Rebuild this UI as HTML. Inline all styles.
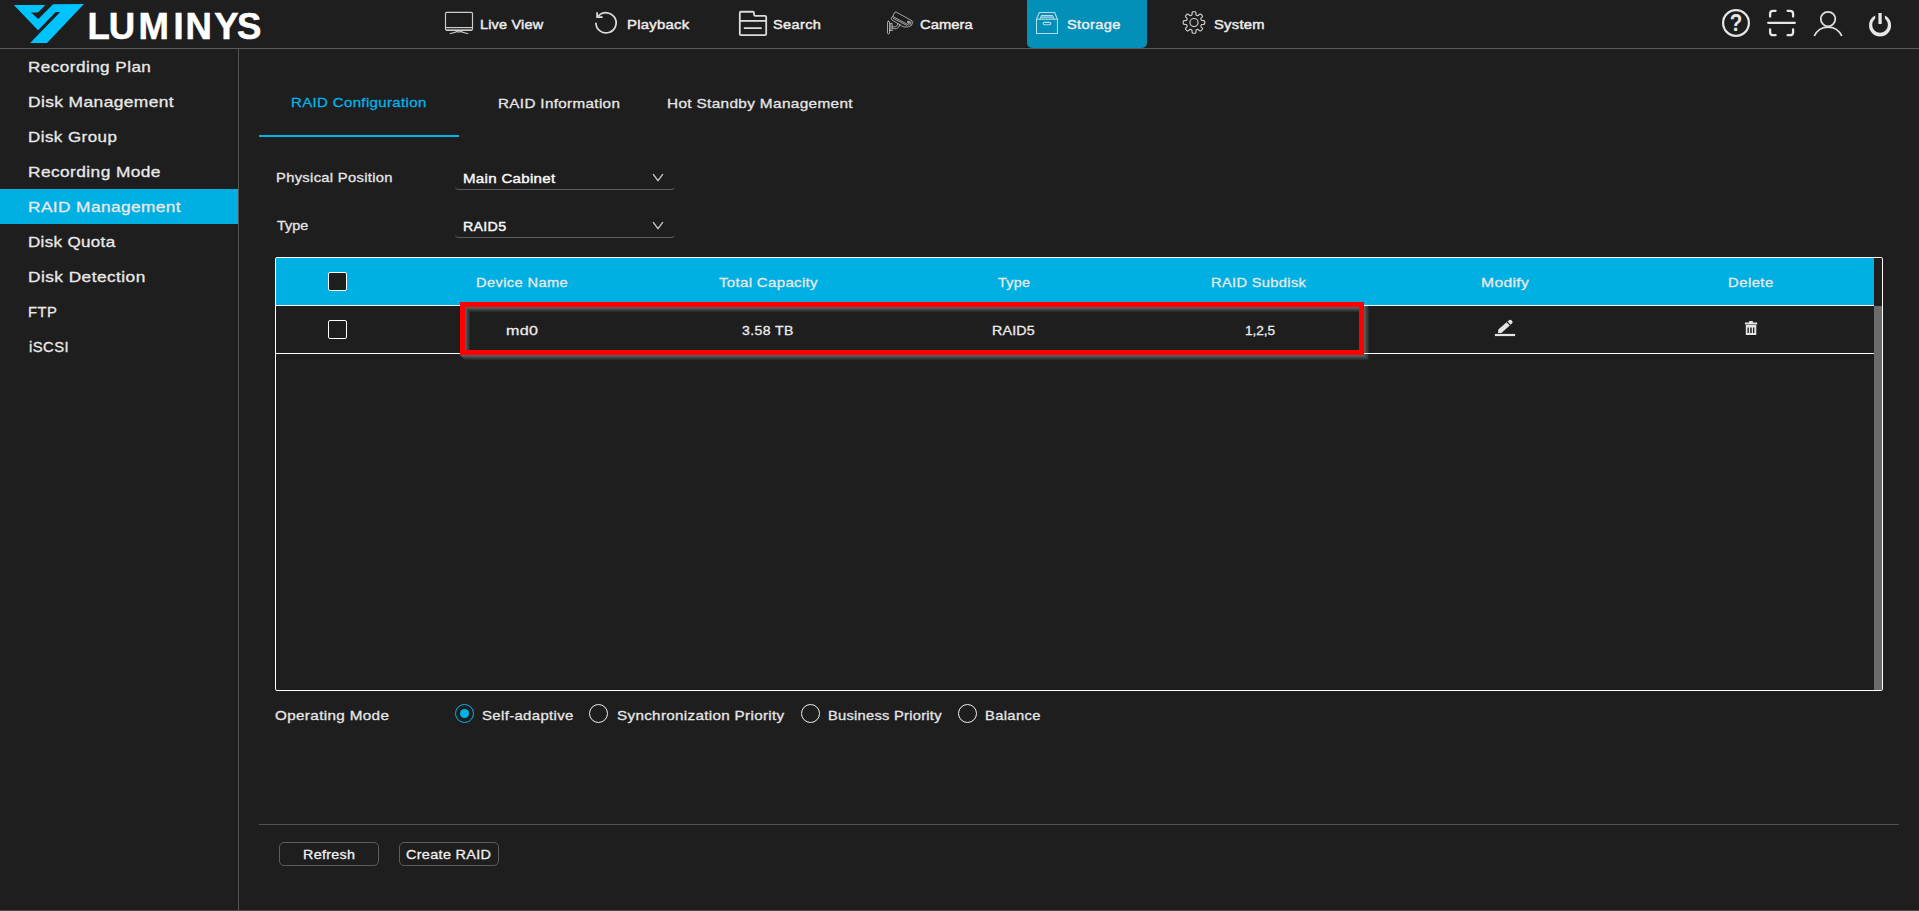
<!DOCTYPE html>
<html lang="en">
<head>
<meta charset="utf-8">
<title>LUMINYS - Storage - RAID Management</title>
<style>
*{box-sizing:border-box;margin:0;padding:0}
html,body{width:1919px;height:911px;overflow:hidden;background:#1e1e1e;font-family:"Liberation Sans",sans-serif;color:#e6e6e6}
.t{text-decoration:none;position:absolute;white-space:nowrap;line-height:20px;height:20px;transform-origin:0 50%;display:block}
.abs{position:absolute}
svg{position:absolute;overflow:visible}
ul{list-style:none}
/* header */
#hdr-line{left:0;top:48px;width:1919px;height:1px;background:#5a5a5a}
#nav-active{left:1027px;top:0;width:120px;height:48px;background:#028fb8;border-radius:0 0 5px 5px}
/* sidebar */
#side-line{left:238px;top:49px;width:1px;height:862px;background:#555}
#side-active{left:0;top:189px;width:238px;height:35px;background:#00b0e2}
#bottom-line{left:0;top:910px;width:1919px;height:1px;background:#4a4a4a}
/* tabs */
#tab-ul{left:259px;top:135px;width:200px;height:2px;background:#00b4e8}
.sel-line{height:25px;width:220px;left:455px;border-bottom:1px solid #5e5e5e;border-radius:4px}
/* table */
#tbl{left:275px;top:257px;width:1608px;height:434px;border:1px solid #fff;border-radius:2px}
#thead{left:276px;top:258px;width:1598px;height:47px;background:#00b0e2}
.hline{left:276px;width:1598px;height:1px;background:#fff}
#sbar{left:1874px;top:306px;width:8px;height:384px;background:#6b6b6b}
.cb{width:19px;height:19px;border:1px solid #fff;border-radius:2px;background:#1e1e1e;left:328px}
#redbox{left:460px;top:302px;width:904px;height:53px;border:5px solid #fe0000}
.radio{width:19px;height:19px;border-radius:50%;border:1px solid #f0f0f0;top:704px}
.radio.on{border-color:#00b4e8}
.radio.on::after{content:"";position:absolute;left:4px;top:4px;width:9px;height:9px;border-radius:50%;background:#00b4e8}
#foot-line{left:259px;top:824px;width:1640px;height:1px;background:#505050}
.btn{top:842px;width:100px;height:24px;border:1px solid #5c5c5c;border-radius:5px;background:#1e1e1e}
</style>
</head>
<body>
<header>
  <div class="abs" id="nav-active"></div>
  <div id="logo">
    <svg style="left:0;top:0" width="92" height="48" viewBox="0 0 92 48"><path fill="#00c4ff" d="M13.8,5 L45.4,5 L37.9,12.5 L30.9,12.5 L38.3,19.1 L53.05,4.2 L83.9,3.95 L47,42.95 L30.1,42.95 L60.2,12 L55.7,12 L38.05,30.15 Z"/></svg>
    <svg id="logo-text" style="left:0;top:0" width="280" height="48" viewBox="0 0 280 48"><text x="87.6 108.8 138.6 173.6 185.6 214.2 237.0" y="39" font-family="Liberation Sans, sans-serif" font-weight="700" font-size="36.5" fill="#fff" stroke="#fff" stroke-width="0.55">LUMINYS</text></svg>
  </div>
  <nav>
    <a class="t" style="left:479.9px;top:15px;font-size:13.4px;color:#ececec;letter-spacing:0.161px;transform:scaleX(1.0811);-webkit-text-stroke:0.45px #ececec;">Live View</a><a class="t" style="left:626.8px;top:15px;font-size:13.4px;color:#ececec;letter-spacing:0.248px;transform:scaleX(1.1091);-webkit-text-stroke:0.45px #ececec;">Playback</a><a class="t" style="left:773.0px;top:15px;font-size:13.4px;color:#ececec;letter-spacing:0.337px;transform:scaleX(1.0856);-webkit-text-stroke:0.45px #ececec;">Search</a><a class="t" style="left:920.3px;top:15px;font-size:13.4px;color:#ececec;letter-spacing:0.046px;transform:scaleX(1.1009);-webkit-text-stroke:0.45px #ececec;">Camera</a><a class="t" style="left:1067.1px;top:15px;font-size:13.4px;color:#ececec;letter-spacing:0.331px;transform:scaleX(1.0923);-webkit-text-stroke:0.45px #ececec;">Storage</a><a class="t" style="left:1214.0px;top:15px;font-size:13.4px;color:#ececec;letter-spacing:0.264px;transform:scaleX(1.1006);-webkit-text-stroke:0.45px #ececec;">System</a>
  </nav>

  <svg id="hdr-icons" style="left:0;top:0" width="1919" height="48" viewBox="0 0 1919 48" fill="none" stroke="#d4d4d4" stroke-linecap="round" stroke-linejoin="round">
    <!-- live view monitor -->
    <g stroke-width="1.15" stroke="#cdcdcd">
      <rect x="445.5" y="12.4" width="27" height="17.9" rx="1.2"/>
      <path d="M445.5,27.5 H472.5"/>
      <path d="M446.5,29.3 H472" stroke-width="1.1" stroke="#a8a8a8"/>
      <path d="M450.3,33.5 C454.5,32.3 456.6,32.6 457,30.8 M467.7,33.5 C463.5,32.3 461.4,32.6 461,30.8 M457.6,31.8 H460.4" stroke-width="1.2"/>
    </g>
    <!-- playback -->
    <g stroke-width="1.75" stroke="#dcdcdc">
      <path d="M595.9,22.8 A10.1,10.1 0 1 0 598.3,16.3" stroke-linecap="butt"/>
      <path d="M597.1,12.2 V17.2 H602.6" stroke-linecap="butt" stroke-linejoin="miter"/>
    </g>
    <!-- search folder -->
    <g stroke-width="1.8" stroke="#dcdcdc">
      <path d="M739.8,12.95 Q739.8,11.75 741,11.75 L752.8,11.75 Q754,11.75 754,12.95 L754,14.6 Q754,15.8 755.2,15.8 L765,15.8 Q766.2,15.8 766.2,17 L766.2,33.9 Q766.2,35.1 765,35.1 L741,35.1 Q739.8,35.1 739.8,33.9 Z"/>
      <path d="M739.8,20.9 H766.2" stroke-linecap="butt"/>
      <path d="M744.6,28.2 H761"/>
    </g>
    <!-- camera (cctv) -->
    <g transform="translate(884,9) scale(0.03074)" stroke-width="26" stroke="#c4c4c4">
      <path d="M290,245 L335,130 Q352,88 395,100 L915,385 Q950,405 935,435 L888,540 Q800,585 700,590 Q620,585 565,545 L250,350 Q215,320 240,285 Z"/>
      <path d="M290,245 L800,520"/>
      <path d="M300,305 L735,530"/>
      <path d="M885,415 L850,505"/>
      <rect x="772" y="402" width="66" height="58" rx="8" fill="#8a8a8a" stroke-width="24"/>
      <rect x="114" y="400" width="65" height="407" rx="28"/>
      <path d="M179,470 H265 V640 M179,700 H280 M222,490 V680" />
      <path d="M265,578 L370,578 Q445,560 455,470 M265,640 L400,640 Q495,620 520,505"/>
    </g>
    <!-- storage box -->
    <g transform="translate(1031,9) scale(0.03074)" stroke-width="34" stroke="#b4dce8">
      <rect x="180" y="335" width="680" height="460"/>
      <path d="M180,335 L270,112 L770,112 L860,335"/>
      <path d="M290,322 L345,215 L700,215 L750,322 M325,285 H722" />
      <path d="M335,250 H712" stroke="#7cc0d6"/>
      <rect x="395" y="435" width="250" height="80" rx="40"/>
    </g>
    <!-- system gear -->
    <g stroke-width="1.15" stroke="#cfcfcf">
      <path d="M1204.75,22.50 L1204.74,22.78 L1204.73,23.06 L1204.71,23.34 L1204.66,23.62 L1204.59,23.89 L1204.40,24.15 L1203.94,24.34 L1203.07,24.43 L1202.17,24.46 L1201.67,24.55 L1201.44,24.70 L1201.32,24.88 L1201.24,25.06 L1201.16,25.25 L1201.08,25.43 L1201.00,25.62 L1200.93,25.80 L1200.86,26.00 L1200.82,26.20 L1200.87,26.47 L1201.17,26.89 L1201.78,27.55 L1202.33,28.23 L1202.52,28.69 L1202.47,29.00 L1202.33,29.25 L1202.17,29.47 L1201.98,29.69 L1201.79,29.90 L1201.60,30.10 L1201.40,30.29 L1201.19,30.48 L1200.97,30.67 L1200.75,30.83 L1200.50,30.97 L1200.19,31.02 L1199.73,30.83 L1199.05,30.28 L1198.39,29.67 L1197.97,29.37 L1197.70,29.32 L1197.50,29.36 L1197.30,29.43 L1197.12,29.50 L1196.93,29.58 L1196.75,29.66 L1196.56,29.74 L1196.38,29.82 L1196.20,29.94 L1196.05,30.17 L1195.96,30.67 L1195.93,31.57 L1195.84,32.44 L1195.65,32.90 L1195.39,33.09 L1195.12,33.16 L1194.84,33.21 L1194.56,33.23 L1194.28,33.24 L1194.00,33.25 L1193.72,33.24 L1193.44,33.23 L1193.16,33.21 L1192.88,33.16 L1192.61,33.09 L1192.35,32.90 L1192.16,32.44 L1192.07,31.57 L1192.04,30.67 L1191.95,30.17 L1191.80,29.94 L1191.62,29.82 L1191.44,29.74 L1191.25,29.66 L1191.07,29.58 L1190.88,29.50 L1190.70,29.43 L1190.50,29.36 L1190.30,29.32 L1190.03,29.37 L1189.61,29.67 L1188.95,30.28 L1188.27,30.83 L1187.81,31.02 L1187.50,30.97 L1187.25,30.83 L1187.03,30.67 L1186.81,30.48 L1186.60,30.29 L1186.40,30.10 L1186.21,29.90 L1186.02,29.69 L1185.83,29.47 L1185.67,29.25 L1185.53,29.00 L1185.48,28.69 L1185.67,28.23 L1186.22,27.55 L1186.83,26.89 L1187.13,26.47 L1187.18,26.20 L1187.14,26.00 L1187.07,25.80 L1187.00,25.62 L1186.92,25.43 L1186.84,25.25 L1186.76,25.06 L1186.68,24.88 L1186.56,24.70 L1186.33,24.55 L1185.83,24.46 L1184.93,24.43 L1184.06,24.34 L1183.60,24.15 L1183.41,23.89 L1183.34,23.62 L1183.29,23.34 L1183.27,23.06 L1183.26,22.78 L1183.25,22.50 L1183.26,22.22 L1183.27,21.94 L1183.29,21.66 L1183.34,21.38 L1183.41,21.11 L1183.60,20.85 L1184.06,20.66 L1184.93,20.57 L1185.83,20.54 L1186.33,20.45 L1186.56,20.30 L1186.68,20.12 L1186.76,19.94 L1186.84,19.75 L1186.92,19.57 L1187.00,19.38 L1187.07,19.20 L1187.14,19.00 L1187.18,18.80 L1187.13,18.53 L1186.83,18.11 L1186.22,17.45 L1185.67,16.77 L1185.48,16.31 L1185.53,16.00 L1185.67,15.75 L1185.83,15.53 L1186.02,15.31 L1186.21,15.10 L1186.40,14.90 L1186.60,14.71 L1186.81,14.52 L1187.03,14.33 L1187.25,14.17 L1187.50,14.03 L1187.81,13.98 L1188.27,14.17 L1188.95,14.72 L1189.61,15.33 L1190.03,15.63 L1190.30,15.68 L1190.50,15.64 L1190.70,15.57 L1190.88,15.50 L1191.07,15.42 L1191.25,15.34 L1191.44,15.26 L1191.62,15.18 L1191.80,15.06 L1191.95,14.83 L1192.04,14.33 L1192.07,13.43 L1192.16,12.56 L1192.35,12.10 L1192.61,11.91 L1192.88,11.84 L1193.16,11.79 L1193.44,11.77 L1193.72,11.76 L1194.00,11.75 L1194.28,11.76 L1194.56,11.77 L1194.84,11.79 L1195.12,11.84 L1195.39,11.91 L1195.65,12.10 L1195.84,12.56 L1195.93,13.43 L1195.96,14.33 L1196.05,14.83 L1196.20,15.06 L1196.38,15.18 L1196.56,15.26 L1196.75,15.34 L1196.93,15.42 L1197.12,15.50 L1197.30,15.57 L1197.50,15.64 L1197.70,15.68 L1197.97,15.63 L1198.39,15.33 L1199.05,14.72 L1199.73,14.17 L1200.19,13.98 L1200.50,14.03 L1200.75,14.17 L1200.97,14.33 L1201.19,14.52 L1201.40,14.71 L1201.60,14.90 L1201.79,15.10 L1201.98,15.31 L1202.17,15.53 L1202.33,15.75 L1202.47,16.00 L1202.52,16.31 L1202.33,16.77 L1201.78,17.45 L1201.17,18.11 L1200.87,18.53 L1200.82,18.80 L1200.86,19.00 L1200.93,19.20 L1201.00,19.38 L1201.08,19.57 L1201.16,19.75 L1201.24,19.94 L1201.32,20.12 L1201.44,20.30 L1201.67,20.45 L1202.17,20.54 L1203.07,20.57 L1203.94,20.66 L1204.40,20.85 L1204.59,21.11 L1204.66,21.38 L1204.71,21.66 L1204.73,21.94 L1204.74,22.22 Z"/>
      <circle cx="1194" cy="22.5" r="4.05"/>
    </g>
    <!-- help -->
    <circle cx="1736" cy="23" r="12.9" stroke-width="2.2" stroke="#e6e6e6"/>
    <text x="0" y="31.2" transform="translate(1736,0) scale(0.87,1)" text-anchor="middle" font-family="Liberation Sans, sans-serif" font-weight="700" font-size="23.6" fill="#e6e6e6" stroke="none">?</text>
    <!-- scan / fullscreen -->
    <g stroke-width="2.3" stroke="#e6e6e6">
      <path d="M1770.1,16.6 V13.8 Q1770.1,10.8 1773.1,10.8 H1775.6 M1787.6,10.8 H1790.1 Q1793.1,10.8 1793.1,13.8 V16.6 M1793.1,29.4 V32.2 Q1793.1,35.2 1790.1,35.2 H1787.6 M1775.6,35.2 H1773.1 Q1770.1,35.2 1770.1,32.2 V29.4"/>
      <path d="M1768.2,22.8 H1794.8"/>
    </g>
    <!-- user -->
    <g stroke-width="1.8" stroke="#e0e0e0">
      <circle cx="1828.05" cy="19.1" r="7.25"/>
      <path d="M1814.3,36 A15,15 0 0 1 1841.8,36" stroke-linecap="butt"/>
    </g>
    <!-- power -->
    <g stroke="none" fill="#e6e6e6">
      <path fill-rule="evenodd" d="M1869.05,25.4 a11,11 0 1 0 22,0 a11,11 0 1 0 -22,0 Z M1872.2,24.9 a7.85,7.85 0 1 1 15.7,0 a7.85,7.85 0 1 1 -15.7,0 Z"/>
      <rect x="1875.2" y="10" width="9.7" height="12" fill="#1e1e1e"/>
      <rect x="1878.4" y="13.1" width="3.3" height="10.8" rx="0.4"/>
    </g>
  </svg>
  <div class="abs" id="hdr-line"></div>
</header>
<aside>
  <div class="abs" id="side-active"></div>
  <ul>
    <li><span class="t" style="left:27.9px;top:57px;font-size:14.8px;color:#e9e9e9;letter-spacing:0.380px;transform:scaleX(1.1581);-webkit-text-stroke:0.3px #e9e9e9;">Recording Plan</span></li><li><span class="t" style="left:27.9px;top:92px;font-size:14.8px;color:#e9e9e9;letter-spacing:0.336px;transform:scaleX(1.1754);-webkit-text-stroke:0.3px #e9e9e9;">Disk Management</span></li><li><span class="t" style="left:27.9px;top:127px;font-size:14.8px;color:#e9e9e9;letter-spacing:0.417px;transform:scaleX(1.1432);-webkit-text-stroke:0.3px #e9e9e9;">Disk Group</span></li><li><span class="t" style="left:27.9px;top:162px;font-size:14.8px;color:#e9e9e9;letter-spacing:0.366px;transform:scaleX(1.1691);-webkit-text-stroke:0.3px #e9e9e9;">Recording Mode</span></li>
    <li><span class="t" style="left:27.9px;top:197px;font-size:14.8px;color:#e9e9e9;letter-spacing:0.349px;transform:scaleX(1.1673);-webkit-text-stroke:0.3px #e9e9e9;">RAID Management</span></li><li><span class="t" style="left:27.9px;top:232px;font-size:14.8px;color:#e9e9e9;letter-spacing:0.281px;transform:scaleX(1.1502);-webkit-text-stroke:0.3px #e9e9e9;">Disk Quota</span></li><li><span class="t" style="left:27.9px;top:267px;font-size:14.8px;color:#e9e9e9;letter-spacing:0.392px;transform:scaleX(1.1671);-webkit-text-stroke:0.3px #e9e9e9;">Disk Detection</span></li><li><span class="t" style="left:27.9px;top:302px;font-size:14.8px;color:#e9e9e9;letter-spacing:0.573px;transform:scaleX(1.0000);-webkit-text-stroke:0.3px #e9e9e9;">FTP</span></li><li><span class="t" style="left:28.9px;top:337px;font-size:14.8px;color:#e9e9e9;letter-spacing:0.450px;transform:scaleX(1.0018);-webkit-text-stroke:0.3px #e9e9e9;">iSCSI</span></li>
  </ul>
  <div class="abs" id="side-line"></div>
</aside>
<main>
  <div id="tabs"><span class="t" style="left:291.1px;top:93px;font-size:13.6px;color:#00b4e8;letter-spacing:0.321px;transform:scaleX(1.1037);-webkit-text-stroke:0.3px #00b4e8;">RAID Configuration</span><span class="t" style="left:498.1px;top:94px;font-size:13.6px;color:#e6e6e6;letter-spacing:0.312px;transform:scaleX(1.1189);-webkit-text-stroke:0.3px #e6e6e6;">RAID Information</span><span class="t" style="left:666.5px;top:94px;font-size:13.6px;color:#e6e6e6;letter-spacing:0.292px;transform:scaleX(1.1313);-webkit-text-stroke:0.3px #e6e6e6;">Hot Standby Management</span><div class="abs" id="tab-ul"></div></div>
  <div id="form">
    <label class="t" style="left:275.5px;top:168px;font-size:13.6px;color:#e6e6e6;letter-spacing:0.300px;transform:scaleX(1.0831);-webkit-text-stroke:0.3px #e6e6e6;">Physical Position</label><span class="t" style="left:462.8px;top:169px;font-size:13.6px;color:#fafafa;letter-spacing:0.267px;transform:scaleX(1.1102);-webkit-text-stroke:0.4px #fafafa;">Main Cabinet</span><div class="abs sel-line" style="top:165px"></div>
    <label class="t" style="left:276.5px;top:216px;font-size:13.6px;color:#e6e6e6;letter-spacing:0.048px;transform:scaleX(1.0598);-webkit-text-stroke:0.3px #e6e6e6;">Type</label><span class="t" style="left:462.8px;top:217px;font-size:13.6px;color:#fafafa;letter-spacing:0.252px;transform:scaleX(1.0498);-webkit-text-stroke:0.4px #fafafa;">RAID5</span><div class="abs sel-line" style="top:213px"></div>
  </div>
  <div class="abs" id="tbl"></div>
  <div class="abs" id="thead"></div>
  <div class="abs hline" style="top:305px"></div>
  <div class="abs hline" style="top:353px"></div>
  <div class="abs" id="sbar"></div>
  <div class="abs cb" style="top:272px"></div>
  <div class="abs cb" style="top:320px"></div>
  <span class="t" style="left:475.9px;top:273px;font-size:13.6px;color:#e8e8e8;letter-spacing:0.356px;transform:scaleX(1.0769);-webkit-text-stroke:0.3px #e8e8e8;">Device Name</span><span class="t" style="left:718.5px;top:273px;font-size:13.6px;color:#e8e8e8;letter-spacing:0.286px;transform:scaleX(1.1065);-webkit-text-stroke:0.3px #e8e8e8;">Total Capacity</span><span class="t" style="left:998.0px;top:273px;font-size:13.6px;color:#e8e8e8;letter-spacing:0.300px;transform:scaleX(1.0532);-webkit-text-stroke:0.3px #e8e8e8;">Type</span><span class="t" style="left:1211.1px;top:273px;font-size:13.6px;color:#e8e8e8;letter-spacing:0.317px;transform:scaleX(1.0771);-webkit-text-stroke:0.3px #e8e8e8;">RAID Subdisk</span><span class="t" style="left:1480.6px;top:273px;font-size:13.6px;color:#e8e8e8;letter-spacing:0.335px;transform:scaleX(1.1481);-webkit-text-stroke:0.3px #e8e8e8;">Modify</span><span class="t" style="left:1728.1px;top:273px;font-size:13.6px;color:#e8e8e8;letter-spacing:0.410px;transform:scaleX(1.0932);-webkit-text-stroke:0.3px #e8e8e8;">Delete</span>
  <span class="t" style="left:505.6px;top:321px;font-size:13.6px;color:#ececec;letter-spacing:0.300px;transform:scaleX(1.1829);-webkit-text-stroke:0.3px #ececec;">md0</span><span class="t" style="left:742.1px;top:321px;font-size:13.6px;color:#ececec;letter-spacing:0.364px;transform:scaleX(1.0354);-webkit-text-stroke:0.3px #ececec;">3.58 TB</span><span class="t" style="left:991.6px;top:321px;font-size:13.6px;color:#ececec;letter-spacing:0.157px;transform:scaleX(1.0522);-webkit-text-stroke:0.3px #ececec;">RAID5</span><span class="t" style="left:1245.0px;top:321px;font-size:13.6px;color:#ececec;letter-spacing:-0.059px;transform:scaleX(1.0000);-webkit-text-stroke:0.3px #ececec;">1,2,5</span>

  <svg id="main-icons" style="left:0;top:0" width="1919" height="911" viewBox="0 0 1919 911" fill="none">
    <!-- annotation box shadow (extruded) -->
    <defs>
      <linearGradient id="gd" x1="0" y1="0" x2="0" y2="1"><stop offset="0" stop-color="#d0d8d8" stop-opacity="0.38"/><stop offset="1" stop-color="#d0d8d8" stop-opacity="0"/></linearGradient>
      <linearGradient id="gr" x1="0" y1="0" x2="1" y2="0"><stop offset="0" stop-color="#d0d8d8" stop-opacity="0.38"/><stop offset="1" stop-color="#d0d8d8" stop-opacity="0"/></linearGradient>
    </defs>
    <path d="M460,355 H1364 L1369.5,360.5 H465.5 Z" fill="url(#gd)"/>
    <path d="M1364,304 L1369.5,307 V360.5 L1364,355 Z" fill="url(#gr)"/>
    <path d="M465,307 H1359 V312.5 H470.5 Z" fill="url(#gd)"/>
    <path d="M465,307 L470.5,312.5 V350 H465 Z" fill="url(#gr)"/>
    <!-- select chevrons -->
    <path d="M653.1,174.2 L657.95,180.7 L662.9,174.2 M653.1,222.2 L657.95,228.7 L662.9,222.2" stroke="#cfcfcf" stroke-width="1.25"/>
    <!-- modify (pencil) -->
    <g fill="#e4e4e4">
      <rect x="1494.9" y="333.9" width="20.2" height="2.2"/>
      <path d="M1498,333.1 L1498.3,329.6 L1506.6,322.3 L1509.8,325.5 L1501.4,333 Z"/>
      <path d="M1507.5,321.5 L1509.4,319.9 Q1510.3,319.3 1511.1,320.1 L1512.3,321.3 Q1513,322.2 1512.3,323 L1510.6,324.7 Z"/>
    </g>
    <!-- delete (trash) -->
    <g fill="#e4e4e4">
      <rect x="1749" y="320.9" width="4" height="2" rx="0.6"/>
      <rect x="1744.9" y="322.4" width="12.3" height="2.1" rx="0.4"/>
      <path fill-rule="evenodd" d="M1745.8,325 H1756.3 V335.1 H1745.8 Z M1747.5,327.5 V332.9 H1748.8 V327.5 Z M1750.2,327.5 V332.9 H1751.7 V327.5 Z M1753,327.5 V332.9 H1754.3 V327.5 Z"/>
    </g>
  </svg>
  <div class="abs" id="redbox"></div>
  <div id="opmode">
    <label class="t" style="left:275.1px;top:706px;font-size:13.6px;color:#e6e6e6;letter-spacing:0.314px;transform:scaleX(1.1215);-webkit-text-stroke:0.3px #e6e6e6;">Operating Mode</label>
    <div class="abs radio on" style="left:455px"></div><span class="t" style="left:482.0px;top:706px;font-size:13.6px;color:#e6e6e6;letter-spacing:0.315px;transform:scaleX(1.0993);-webkit-text-stroke:0.3px #e6e6e6;">Self-adaptive</span>
    <div class="abs radio" style="left:589px"></div><span class="t" style="left:616.6px;top:706px;font-size:13.6px;color:#e6e6e6;letter-spacing:0.284px;transform:scaleX(1.1196);-webkit-text-stroke:0.3px #e6e6e6;">Synchronization Priority</span>
    <div class="abs radio" style="left:801px"></div><span class="t" style="left:827.5px;top:706px;font-size:13.6px;color:#e6e6e6;letter-spacing:0.242px;transform:scaleX(1.0798);-webkit-text-stroke:0.3px #e6e6e6;">Business Priority</span>
    <div class="abs radio" style="left:958px"></div><span class="t" style="left:985.2px;top:706px;font-size:13.6px;color:#e6e6e6;letter-spacing:0.331px;transform:scaleX(1.0839);-webkit-text-stroke:0.3px #e6e6e6;">Balance</span>
  </div>
  <div class="abs" id="foot-line"></div>
  <div class="abs btn" style="left:279px"></div><span class="t" style="left:303.0px;top:845px;font-size:13.6px;color:#f0f0f0;letter-spacing:0.300px;transform:scaleX(1.0524);-webkit-text-stroke:0.3px #f0f0f0;">Refresh</span>
  <div class="abs btn" style="left:399px"></div><span class="t" style="left:406.1px;top:845px;font-size:13.6px;color:#f0f0f0;letter-spacing:0.300px;transform:scaleX(1.0617);-webkit-text-stroke:0.3px #f0f0f0;">Create RAID</span>
</main>
<div class="abs" id="bottom-line"></div>
</body>
</html>
